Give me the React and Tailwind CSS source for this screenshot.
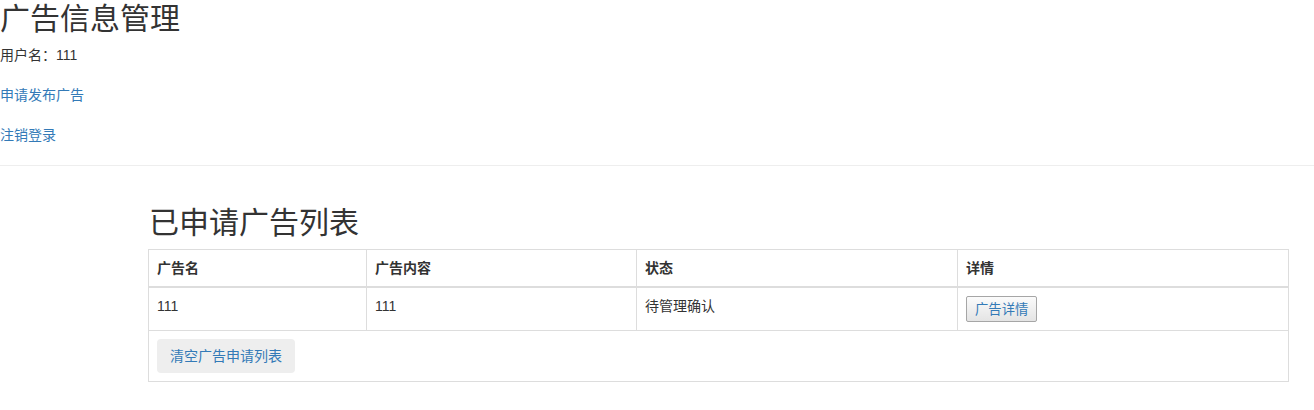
export default function App() {
  const font = { fontFamily: '"Liberation Sans", "Noto Sans CJK SC", sans-serif' };
  return (
    <div className="w-[1314px] h-[410px] bg-white text-[#333] text-[14px] leading-[20px]" style={font}>
      <h1 className="text-[30px] leading-[33px] font-normal m-0 pt-[2px]">广告信息管理</h1>
      <p className="mt-[10px]">用户名：111</p>
      <p className="mt-[20px]"><a className="text-[#337ab7]" href="#">申请发布广告</a></p>
      <p className="mt-[20px]"><a className="text-[#337ab7]" href="#">注销登录</a></p>
      <hr className="mt-[20px] border-0 border-t border-[#eee]" />
      <div className="ml-[148px] w-[1140px] pt-[40px]">
        <h2 className="text-[30px] leading-[33px] font-normal mb-[10px] ml-[1px]">已申请广告列表</h2>
        <table className="w-[1140px] table-fixed border-collapse border border-[#ddd]">
          <colgroup>
            <col className="w-[218px]" />
            <col className="w-[270px]" />
            <col className="w-[321px]" />
            <col className="w-[331px]" />
          </colgroup>
          <thead>
            <tr>
              <th className="text-left font-bold p-[8px] border border-[#ddd] border-b-2 align-bottom">广告名</th>
              <th className="text-left font-bold p-[8px] border border-[#ddd] border-b-2 align-bottom">广告内容</th>
              <th className="text-left font-bold p-[8px] border border-[#ddd] border-b-2 align-bottom">状态</th>
              <th className="text-left font-bold p-[8px] border border-[#ddd] border-b-2 align-bottom">详情</th>
            </tr>
          </thead>
          <tbody>
            <tr>
              <td className="p-[8px] border border-[#ddd] align-top">111</td>
              <td className="p-[8px] border border-[#ddd] align-top">111</td>
              <td className="p-[8px] border border-[#ddd] align-top">待管理确认</td>
              <td className="p-[8px] border border-[#ddd] align-top">
                <button className="block h-[26px] px-[8px] text-[13.33px] leading-[19px] text-[#337ab7] border border-[#a6a6a6] rounded-[2px] bg-gradient-to-b from-[#fbfbfb] to-[#e4e4e4]">广告详情</button>
              </td>
            </tr>
            <tr>
              <td colSpan={4} className="p-[8px] border border-[#ddd] align-top">
                <button className="block h-[34px] px-[13px] text-[14px] leading-[20px] text-[#337ab7] bg-[#eee] rounded-[4px]">清空广告申请列表</button>
              </td>
            </tr>
          </tbody>
        </table>
      </div>
    </div>
  );
}
